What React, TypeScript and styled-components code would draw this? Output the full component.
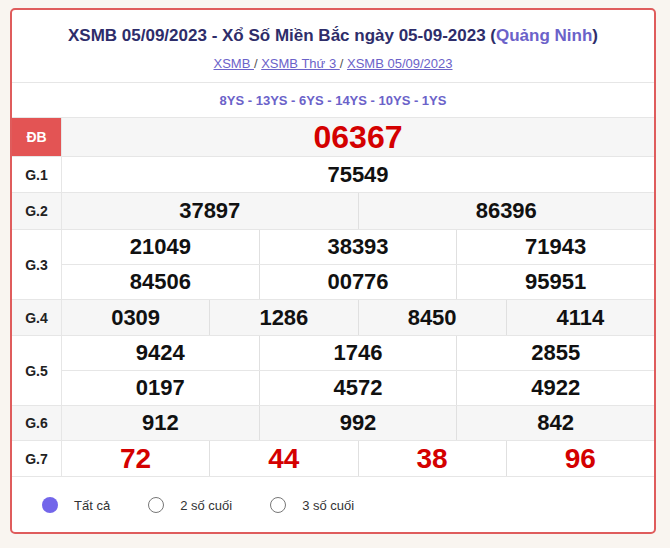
import React from "react";
import styled, { createGlobalStyle } from "styled-components";

const G = createGlobalStyle`
  body{margin:0;background:#f9f5f0;font-family:"Liberation Sans",Arial,sans-serif;}
`;
const Card = styled.div`
  margin:8px 10px 0 10px;width:646px;height:526px;box-sizing:border-box;
  border:2px solid #df5c5c;border-radius:5px;background:#fff;overflow:hidden;
`;
const Head = styled.div`text-align:center;padding:16px 0 11px;border-bottom:1px solid #e6e6e6;`;
const Title = styled.h2`margin:0;font-size:17px;font-weight:bold;color:#2e2d6a;
  span{color:#6b62c9;}`;
const Crumbs = styled.div`margin-top:10px;font-size:13px;color:#555;
  a{color:#6b62c9;text-decoration:underline;}`;
const Codes = styled.div`text-align:center;font-size:13px;font-weight:bold;color:#6b62c9;padding:10px 0 9px;`;
const Table = styled.table`width:100%;border-collapse:collapse;table-layout:fixed;`;
const Tr = styled.tr<{ $alt?: boolean }>`background:${p => (p.$alt ? "#f6f6f6" : "#fff")};`;
const Label = styled.td<{ $red?: boolean }>`
  width:47px;text-align:center;font-size:14px;font-weight:bold;
  color:${p => (p.$red ? "#fff" : "#222")};background:${p => (p.$red ? "#e35454" : "transparent")};
  border-top:1px solid #e6e6e6;border-right:1px solid #e6e6e6;
`;
const Cell = styled.td`padding:0;border-top:1px solid #e6e6e6;`;
const Line = styled.div<{ $h: number }>`display:flex;height:${p => p.$h}px;
  & + &{border-top:1px solid #e6e6e6;}`;
const Num = styled.div<{ $red?: boolean; $size?: number }>`
  flex:1;display:flex;align-items:center;justify-content:center;
  font-family:"Liberation Sans",Arial,sans-serif;font-weight:bold;
  font-size:${p => p.$size || 22}px;color:${p => (p.$red ? "#d40000" : "#111")};
  & + &{border-left:1px solid #e0e0e0;}
`;
const Radios = styled.div`display:flex;align-items:center;padding:20px 0 0 30px;font-size:13px;color:#333;`;
const Radio = styled.label`display:flex;align-items:center;margin-right:38px;`;
const Dot = styled.span<{ $on?: boolean }>`width:16px;height:16px;border-radius:50%;margin-right:16px;box-sizing:border-box;
  ${p => (p.$on ? "background:#7366ea;" : "border:1px solid #777;background:#fff;")}`;

const rows: { l: string; lines: string[][]; h: number; alt?: boolean; red?: boolean; size?: number; lr?: boolean }[] = [
  { l: "ĐB", lines: [["06367"]], h: 38, red: true, size: 32, lr: true, alt: true },
  { l: "G.1", lines: [["75549"]], h: 35 },
  { l: "G.2", lines: [["37897", "86396"]], h: 36, alt: true },
  { l: "G.3", lines: [["21049", "38393", "71943"], ["84506", "00776", "95951"]], h: 34 },
  { l: "G.4", lines: [["0309", "1286", "8450", "4114"]], h: 35, alt: true },
  { l: "G.5", lines: [["9424", "1746", "2855"], ["0197", "4572", "4922"]], h: 34 },
  { l: "G.6", lines: [["912", "992", "842"]], h: 34, alt: true },
  { l: "G.7", lines: [["72", "44", "38", "96"]], h: 35, red: true, size: 28 },
];

export default function App() {
  return (
    <>
      <G />
      <Card>
        <Head>
          <Title>XSMB 05/09/2023 - Xổ Số Miền Bắc ngày 05-09-2023 (<span>Quảng Ninh</span>)</Title>
          <Crumbs><a>XSMB </a> / <a>XSMB Thứ 3 </a> / <a>XSMB 05/09/2023</a></Crumbs>
        </Head>
        <Codes>8YS - 13YS - 6YS - 14YS - 10YS - 1YS</Codes>
        <Table>
          <tbody>
            {rows.map(r => (
              <Tr key={r.l} $alt={r.alt}>
                <Label $red={r.lr}>{r.l}</Label>
                <Cell>
                  {r.lines.map((ln, i) => (
                    <Line key={i} $h={r.h}>
                      {ln.map((n, j) => <Num key={j} $red={r.red} $size={r.size}>{n}</Num>)}
                    </Line>
                  ))}
                </Cell>
              </Tr>
            ))}
            <Tr><Label style={{ height: 0, padding: 0, borderRight: "none" }} /><Cell /></Tr>
          </tbody>
        </Table>
        <Radios>
          <Radio><Dot $on />Tất cả</Radio>
          <Radio><Dot />2 số cuối</Radio>
          <Radio><Dot />3 số cuối</Radio>
        </Radios>
      </Card>
    </>
  );
}
